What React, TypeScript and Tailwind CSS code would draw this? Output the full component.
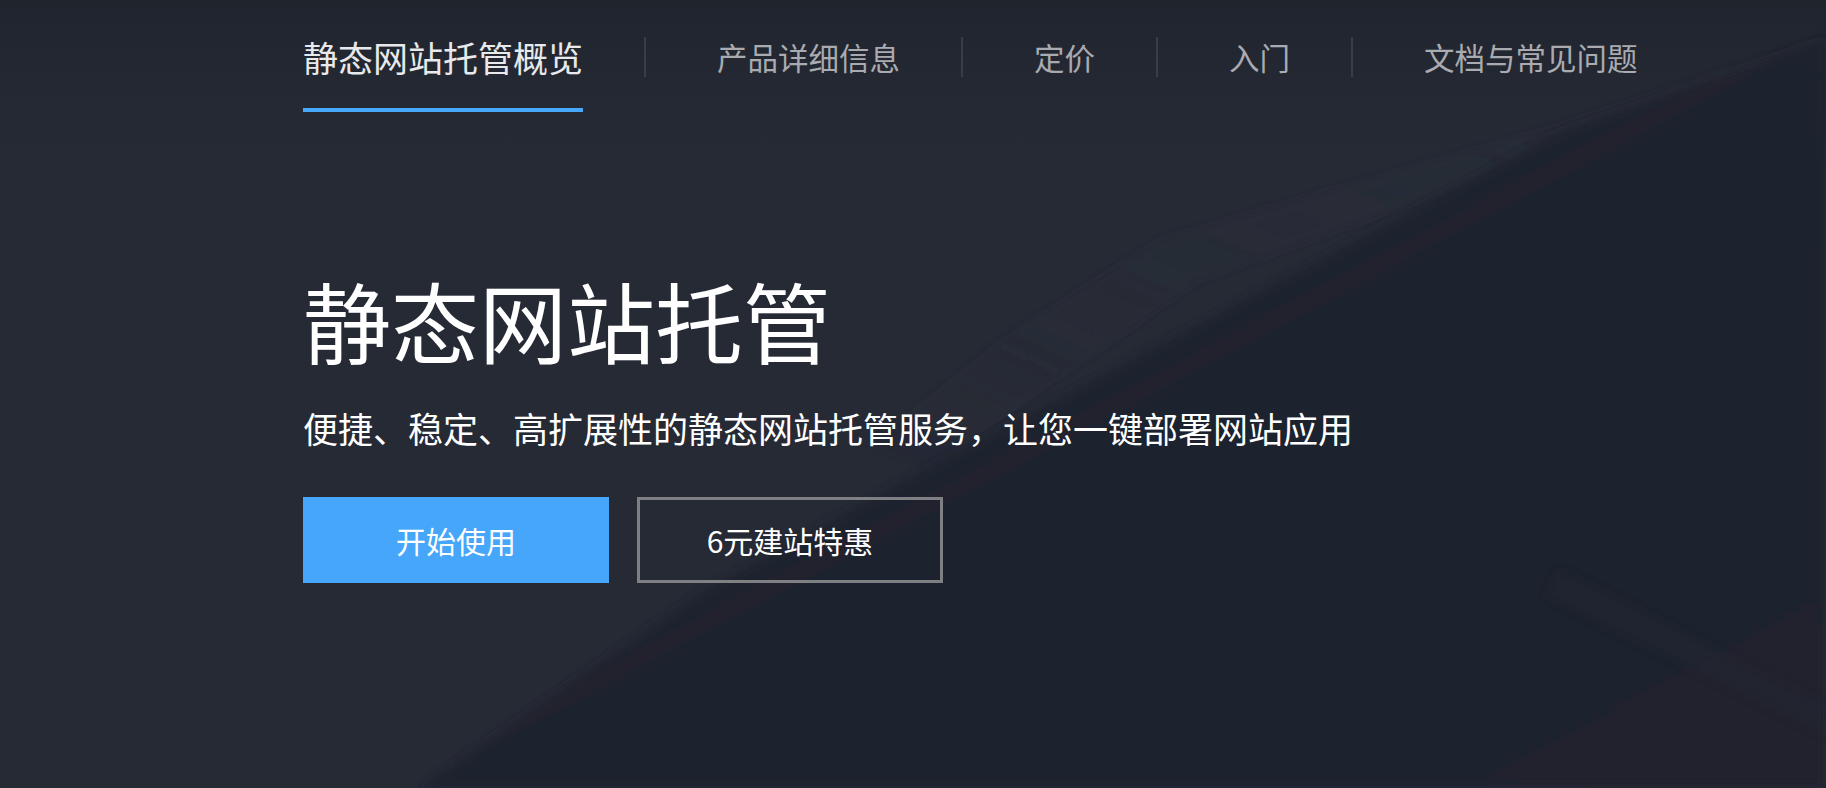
import React from "react";

const navItems = ["产品详细信息", "定价", "入门", "文档与常见问题"];

function Backdrop() {
  // faint faceted shapes behind the hero
  return (
    <svg
      className="pointer-events-none absolute inset-0 h-full w-full"
      viewBox="0 0 1826 788"
      preserveAspectRatio="none"
    >
      <defs>
        <linearGradient id="topShade" x1="0" y1="0" x2="0" y2="1">
          <stop offset="0" stopColor="#20242d" />
          <stop offset="0.25" stopColor="#262a35" stopOpacity="0" />
        </linearGradient>
        <linearGradient id="darkFacet" x1="0" y1="0" x2="1" y2="1">
          <stop offset="0" stopColor="#1f232d" stopOpacity="0.6" />
          <stop offset="0.5" stopColor="#1f232d" />
          <stop offset="1" stopColor="#20242e" />
        </linearGradient>
        <linearGradient id="lightBand" x1="0" y1="1" x2="1" y2="0">
          <stop offset="0" stopColor="#292d38" stopOpacity="0" />
          <stop offset="0.5" stopColor="#292d38" stopOpacity="0.5" />
          <stop offset="1" stopColor="#292d38" stopOpacity="0.2" />
        </linearGradient>
        <filter id="soft" x="-10%" y="-10%" width="120%" height="120%">
          <feGaussianBlur stdDeviation="4" />
        </filter>
      </defs>
      <rect width="1826" height="788" fill="#262a35" />
      <rect width="1826" height="788" fill="url(#topShade)" />
      <polygon
        points="860,450 1000,340 1160,240 1560,125 1826,35 1826,70 1570,145 1200,280 930,470"
        fill="url(#lightBand)"
        filter="url(#soft)"
      />
      <polygon
        points="420,788 700,593 901,482 1562,131 1826,40 1826,788"
        fill="url(#darkFacet)"
        filter="url(#soft)"
      />
      <polygon
        points="1560,570 1826,705 1826,735 1545,595"
        fill="#232733"
        opacity="0.5"
        filter="url(#soft)"
      />
    </svg>
  );
}

export default function App() {
  return (
    <div
      className="relative h-[788px] w-full overflow-hidden bg-[#262a35]"
      style={{ fontFamily: '"Noto Sans CJK SC", "Noto Sans", sans-serif' }}
    >
      <Backdrop />
      <div className="relative pl-[303px]">
        <nav className="flex h-[112px] items-stretch">
          <div className="flex items-start border-b-4 border-[#48a8f9] pt-[39px] text-[35px] leading-none text-[#e8e9eb]">
            静态网站托管概览
          </div>
          {navItems.map((item) => (
            <div key={item} className="flex items-start">
              <span className="ml-[61px] mt-[37px] h-[40px] w-[2px] bg-[#383d49]" />
              <a className="ml-[71px] pt-[42px] text-[30.5px] leading-none text-[#a9abb0]">
                {item}
              </a>
            </div>
          ))}
        </nav>

        <h1 className="mt-[163px] text-[88px] font-normal leading-none text-white">
          静态网站托管
        </h1>
        <p className="mt-[47px] text-[35px] leading-none text-white">
          便捷、稳定、高扩展性的静态网站托管服务，让您一键部署网站应用
        </p>

        <div className="mt-[52px] flex gap-[28px]">
          <button className="flex h-[86px] w-[306px] items-center justify-center bg-[#46a6fa] text-[30px] leading-none text-white">
            开始使用
          </button>
          <button className="flex h-[86px] w-[306px] items-center justify-center border-[3px] border-[#7f8084] text-[30px] leading-none text-white">
            6元建站特惠
          </button>
        </div>
      </div>
    </div>
  );
}
